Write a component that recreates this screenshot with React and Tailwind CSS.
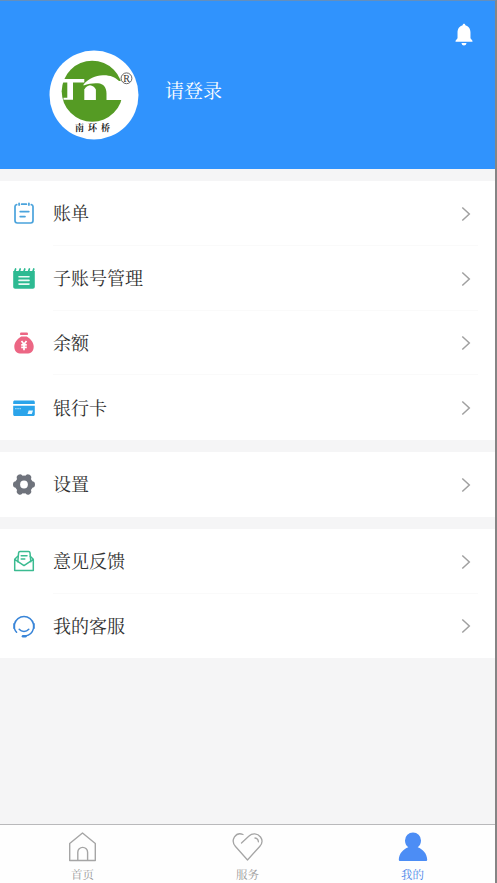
function BillIcon() {
    return (
        <svg width="24" height="24" viewBox="0 0 24 24" fill="none" stroke="#4aa3dc" strokeWidth="1.7" strokeLinecap="round">
            <path d="M4.7 3.6C3.500 3.800 3 4.500 3 5.600v14c0 1.500.9 2.400 2.400 2.400h13.200c1.500 0 2.400-.9 2.400-2.400v-14c0-1.100-.5-1.800-1.700-2" />
            <path d="M9.600 3.200h4.800M7.100 2.300v1.800M16.900 2.300v1.800M8.200 10.600h8.600M8.200 15.600h4.800" />
        </svg>
    );
}

function AccountsIcon() {
    return (
        <svg width="24" height="24" viewBox="0 0 24 24" fill="none">
            <path d="M1.200 5h21.600v15.700c0 1.200-.8 2-2 2H3.200c-1.200 0-2-.8-2-2z" fill="#2dba92" />
            <path d="M2.800 5.200 3.600 3M7.400 5.200 8.200 3M12 5.200l.8-2.200M16.600 5.200l.8-2.200M21 5.200l.8-2.200" stroke="#2dba92" strokeWidth="1.700" strokeLinecap="round" />
            <path d="M7 10.700h10M7 14.400h10M7 18.100h10" stroke="#e9faf4" strokeWidth="1.600" strokeLinecap="round" />
        </svg>
    );
}

function BalanceIcon() {
    return (
        <svg width="24" height="24" viewBox="0 0 24 24" fill="none">
            <rect x="8" y="1.600" width="8" height="2.500" rx="1.200" fill="#ec6684" />
            <path d="M9.300 5.400h5.400c4.200 2.500 7 6.200 7 10 0 4.800-3 7.200-7 7.200H9.300c-4 0-7-2.400-7-7.200 0-3.800 2.800-7.500 7-10z" fill="#ec6684" />
            <path d="m9.500 10 2.500 3.300 2.500-3.300M12 13v6.200M9.200 13.800h5.600M9.200 16.400h5.600" stroke="#fff" strokeWidth="1.700" />
        </svg>
    );
}

function CardIcon() {
    return (
        <svg width="24" height="24" viewBox="0 0 24 24">
            <path d="M2.700 4.400h18.600c.9 0 1.500.6 1.500 1.500V8H1.200V5.900c0-.9.600-1.500 1.500-1.500zM1.200 9.800h21.600v8.800c0 .9-.6 1.500-1.500 1.500H2.700c-.9 0-1.500-.6-1.500-1.500z" fill="#2ba4ea" />
            <path d="M3 12.700h6" stroke="#8ad0f8" strokeWidth="1.300" strokeDasharray="1.700 .5" />
            <path d="M16.700 14.400h4.300l-1.200 3.600h-4.300z" fill="#e9f8ff" />
        </svg>
    );
}

function GearIcon() {
    return (
        <svg width="24" height="24" viewBox="0 0 24 24" fill="none">
            <circle cx="12" cy="12.500" r="9" fill="#6f737c" />
            <path d="M4.200 12.500h15.600M8 5.600l8 13.800M16 5.600 8 19.400" stroke="#6f737c" strokeWidth="6.400" strokeLinecap="round" />
            <circle cx="12" cy="12.500" r="3.900" fill="#fff" />
        </svg>
    );
}

function FeedbackIcon() {
    return (
        <svg width="24" height="24" viewBox="0 0 24 24" fill="none" stroke="#3bbb91" strokeWidth="1.500" strokeLinejoin="round" strokeLinecap="round">
            <path d="M5.800 12.800 6.600 3.800c.1-.8.600-1.200 1.400-1.200h8.600c.8 0 1.300.4 1.400 1.200l.8 9" />
            <path d="M5.800 7.200 2.700 10.200v11.200h18.600V10.200l-3.100-3M2.700 10.400l9.300 6.200 9.300-6.200M9.200 6.700h5.800M9.200 9.900h3.600" />
        </svg>
    );
}

function ServiceIcon() {
    return (
        <svg width="24" height="24" viewBox="0 0 24 24" fill="none" stroke="#3985d8" strokeWidth="1.500" strokeLinecap="round">
            <path d="M2.500 10a9.800 9.800 0 0 1 19 0" />
            <path d="M2.200 10v4M21.800 10v4" strokeWidth="2" />
            <path d="M21.600 14.200c-1 4.200-4.200 7.300-8.300 7.900" />
            <path d="M11 22.200h2.400" strokeWidth="2.600" />
            <path d="M2.400 14.500c.5 1.500 1.200 2.700 2.200 3.800" />
            <path d="M7.200 15.200c2.500 2.900 7.100 2.900 9.600 0" />
        </svg>
    );
}

function Logo() {
    return (
        <svg width="90" height="90" viewBox="0 0 90 90">
            <circle cx="45" cy="45" r="44.500" fill="#fff" />
            <circle cx="43.200" cy="41.300" r="30.500" fill="#559b24" />
            {/* bridge swoosh with the letters cut out of the disc */}
            <path d="M34.500 34.500C40 28.500 46 25.700 54 25.300c7-.2 12 2 16 5.700h6v19H57.500v-6.500c0-6-3-9.700-8.500-10.200-5-.4-9 .5-14.500 2.200z" fill="#fff" />
            <path d="M12 29h23.300v3.400H24v17.400H14.500v-2h3.800V32.400H12z" fill="#fff" />
            <path d="M35.300 50V39.500c1.500-2.600 3.400-3.800 5.700-4.200 2.500.4 4.500 1.600 5.900 4.200V50z" fill="#fff" />
            <circle cx="77.500" cy="28.300" r="5.400" fill="none" stroke="#555" strokeWidth=".9" />
            <text x="77.500" y="31.700" fontSize="10" textAnchor="middle" fill="#333" fontFamily="Liberation Serif, serif">R</text>
            <text x="26" y="81" fontSize="9" fontWeight="700" letterSpacing="4" fill="#222" fontFamily="Noto Serif CJK SC, Noto Sans CJK SC, serif">南环桥</text>
        </svg>
    );
}

function HomeIcon() {
    return (
        <svg width="30" height="30" viewBox="0 0 30 30" fill="none" stroke="#a5a5a5" strokeWidth="1.400" strokeLinejoin="round">
            <path d="M1.700 11.500 14.500 1l12.800 10.500v17H1.700zM9.800 28.500V20.300a4.900 4.900 0 0 1 9.800 0v8.200" />
        </svg>
    );
}

function HeartIcon() {
    return (
        <svg width="32" height="30" viewBox="0 0 32 30" fill="none" stroke="#a5a5a5" strokeWidth="1.300" strokeLinecap="round" strokeLinejoin="round">
            <path d="M11 2.500C8 1.200 4.500 2 2.500 4.800.5 8 1 11.700 3.500 14.500L15.500 28l12.200-13.500c2.500-2.800 3-6.500.8-9.500-3-4-8.300-4.200-11.500-1L9.500 11" />
            <path d="M23 6c2 .3 3.300 1.600 3.400 3.800" />
        </svg>
    );
}

function PersonIcon() {
    return (
        <svg width="30" height="30" viewBox="0 0 30 30" fill="#4c8df5">
            <path d="M15 .500a8 8 0 0 1 8 8c0 3-1.200 5.200-3.300 6.700 5.200 1.900 9.300 6.500 9.500 12.300 0 1-.5 1.500-1.500 1.500H2.300c-1 0-1.500-.5-1.500-1.500.2-5.800 4.300-10.400 9.500-12.300C8.200 13.700 7 11.500 7 8.500a8 8 0 0 1 8-8z" />
        </svg>
    );
}

const groups = [
    [
        { label: '账单', icon: BillIcon },
        { label: '子账号管理', icon: AccountsIcon },
        { label: '余额', icon: BalanceIcon },
        { label: '银行卡', icon: CardIcon },
    ],
    [{ label: '设置', icon: GearIcon }],
    [
        { label: '意见反馈', icon: FeedbackIcon },
        { label: '我的客服', icon: ServiceIcon },
    ],
];

const tabs = [
    { label: '首页', icon: HomeIcon },
    { label: '服务', icon: HeartIcon },
    { label: '我的', icon: PersonIcon, active: true },
];

function MenuRow({ label, icon: Icon, last }) {
    return (
        <div className="flex h-[64.75px] items-center pl-3">
            <Icon />
            <div className={`ml-[17px] mr-[17px] flex h-full flex-1 items-center justify-between border-b ${last ? 'border-transparent' : 'border-[#fafafa]'}`}>
                <span className="pb-px text-[18px] leading-6 text-[#303030]">{label}</span>
                <svg width="10" height="16" viewBox="0 0 10 16" fill="none" stroke="#a0a0a0" strokeWidth="1.500" className="mr-[7px] mt-[2px]">
                    <path d="m1.300 1.500 7 6.500-7 6.500" />
                </svg>
            </div>
        </div>
    );
}

function App() {
    return (
        <div className="flex h-[883px] w-[497px] flex-col overflow-hidden border-r-2 border-t border-r-[#858585] border-t-[#648fbd] bg-[#f5f5f6] font-['Noto_Serif_CJK_SC','Noto_Sans_CJK_SC',serif]">
            <header className="flex h-[168px] shrink-0 items-start bg-[#3093fd] pl-[49px]">
                <div className="mt-[49px]">
                    <Logo />
                </div>
                <span className="ml-[26px] mt-[77px] text-[19px] leading-6 text-white">请登录</span>
                <svg width="18" height="24" viewBox="0 0 20 24" preserveAspectRatio="none" fill="#fff" className="ml-auto mr-[22px] mt-[22px]">
                    <path d="M10 .800c.9 0 1.500.6 1.500 1.500 3.500.8 5.700 3.600 5.700 7.200v5.800l2.200 2.500v.9H.600v-.9l2.200-2.500V9.500c0-3.600 2.200-6.400 5.700-7.200 0-.9.600-1.500 1.500-1.500zM7.200 20h5.600c-.3 1.700-1.300 2.500-2.800 2.500S7.500 21.700 7.200 20z" />
                </svg>
            </header>

            <main className="flex flex-1 flex-col gap-3 pt-3">
                {groups.map((rows, i) => (
                    <section key={i} className="bg-white">
                        {rows.map((row, j) => (
                            <MenuRow key={row.label} {...row} last={j === rows.length - 1} />
                        ))}
                    </section>
                ))}
            </main>

            <nav className="flex h-[59px] shrink-0 border-t border-[#b9b9bb] bg-[#fefefe]">
                {tabs.map(({ label, icon: Icon, active }) => (
                    <div key={label} className="flex flex-1 flex-col items-center pt-[7px]">
                        <Icon />
                        <span className={`mt-1 text-[11.5px] leading-4 ${active ? 'text-[#4c86e8]' : 'text-[#999999]'}`}>{label}</span>
                    </div>
                ))}
            </nav>
        </div>
    );
}

export default App;
